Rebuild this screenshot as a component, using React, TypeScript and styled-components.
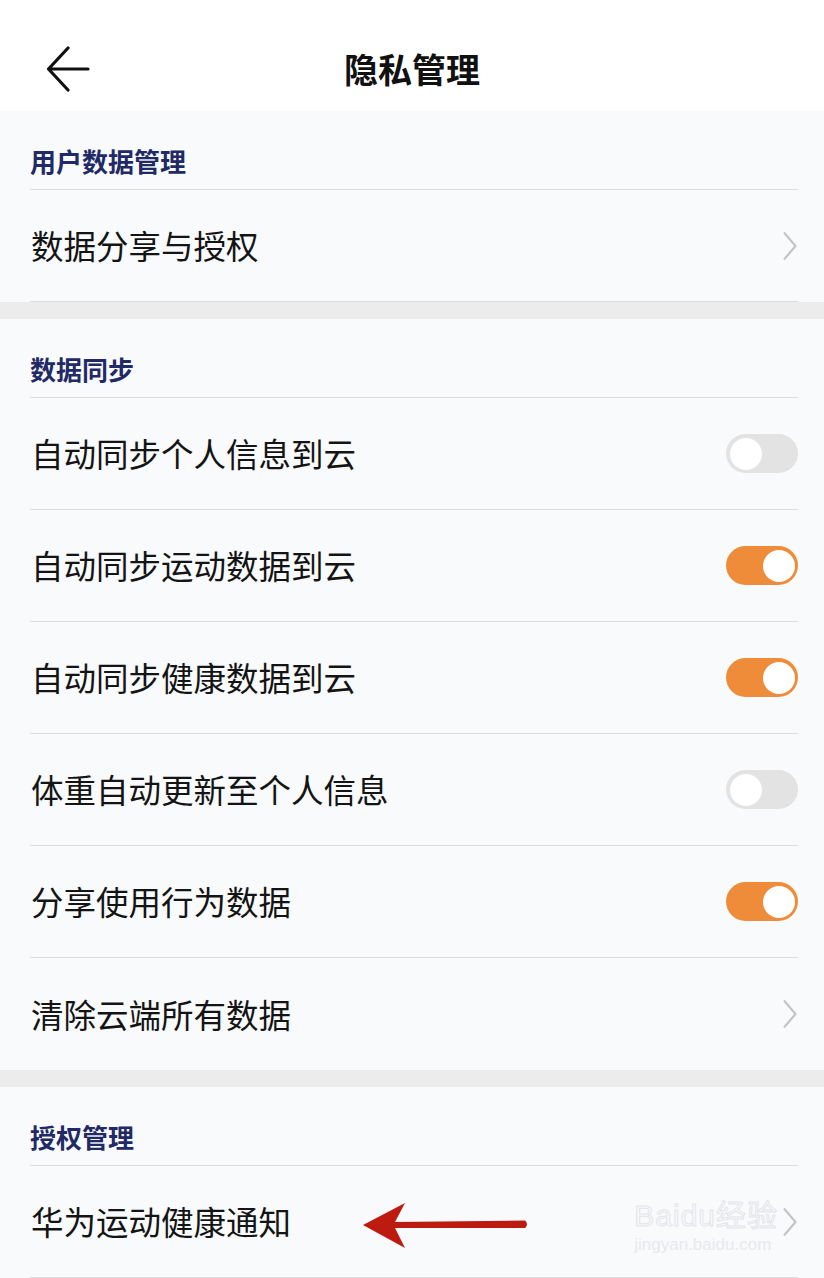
import React from 'react';
import styled, { createGlobalStyle } from 'styled-components';

const GlobalStyle = createGlobalStyle`
  html, body {
    margin: 0;
    padding: 0;
    background: #ececec;
    font-family: "Noto Sans CJK SC", "Noto Sans", sans-serif;
  }
  * { box-sizing: border-box; }
`;

const Page = styled.div`
  width: 824px;
  height: 1278px;
  overflow: hidden;
  display: flex;
  flex-direction: column;
  gap: 17px;
  background: #ececec;
`;

const Header = styled.header`
  height: 112px;
  padding-top: 24px;
  background: #ffffff;
  display: grid;
  grid-template-columns: 120px 1fr 120px;
  align-items: center;
  margin-bottom: -17px;
`;

const BackButton = styled.div`
  padding-left: 46px;
  padding-top: 2px;
  display: flex;
  align-items: center;
`;

const Title = styled.h1`
  margin: 0;
  text-align: center;
  font-size: 34px;
  font-weight: 700;
  color: #111;
  line-height: 1;
  padding-top: 2px;
`;

const Section = styled.section<{ $fill?: boolean }>`
  background: #f9fafc;
  padding: 0 26px 0 30px;
  flex: ${p => (p.$fill ? 1 : 'none')};
`;

const SectionTitle = styled.div`
  height: 79px;
  padding-top: 32px;
  font-size: 26px;
  line-height: 36px;
  font-weight: 700;
  color: #1f2a66;
  border-bottom: 1.5px solid #dcdde0;
`;

const Row = styled.div<{ $last?: boolean }>`
  height: 112px;
  display: flex;
  align-items: center;
  justify-content: space-between;
  position: relative;
  border-bottom: ${p => (p.$last ? 'none' : '1.5px solid #dcdde0')};
`;

const Label = styled.span`
  font-size: 32.5px;
  color: #141414;
  line-height: 1;
  padding-left: 1px;
`;

const Track = styled.div<{ $on: boolean }>`
  width: 72px;
  height: 39px;
  border-radius: 20px;
  background: ${p => (p.$on ? '#ef8c3a' : '#e3e3e3')};
  position: relative;
  flex: none;
`;

const Knob = styled.div<{ $on: boolean }>`
  position: absolute;
  top: 3.5px;
  left: ${p => (p.$on ? '36.5px' : '3.5px')};
  width: 32px;
  height: 32px;
  border-radius: 50%;
  background: #ffffff;
`;

const Annotation = styled.svg`
  position: absolute;
  left: 331px;
  top: 36px;
`;

const Watermark = styled.div`
  position: absolute;
  right: 20px;
  top: 32px;
  display: flex;
  flex-direction: column;
  align-items: flex-start;
  color: transparent;
  -webkit-text-stroke: 1px #e4e5e8;
  font-family: "Liberation Sans", "Noto Sans CJK SC", sans-serif;
  pointer-events: none;
`;

const WaterBig = styled.span`
  font-size: 30px;
  font-weight: 400;
  letter-spacing: 1px;
  line-height: 36px;
`;

const WaterSmall = styled.span`
  font-size: 17px;
  line-height: 22px;
  -webkit-text-stroke: 0;
  color: #e8e9ec;
`;

const Toggle: React.FC<{ on: boolean }> = ({ on }) => (
  <Track $on={on}>
    <Knob $on={on} />
  </Track>
);

const Chevron: React.FC = () => (
  <svg width="16" height="30" viewBox="0 0 16 30">
    <path d="M2 1.5 L13.5 15 L2 28.5" fill="none" stroke="#c3c4c7" strokeWidth="2.2" />
  </svg>
);

const BackArrow: React.FC = () => (
  <svg width="44" height="46" viewBox="0 0 44 46">
    <path d="M42 23 H3 M22 2 L2.5 23 L22 44" fill="none" stroke="#111" strokeWidth="3.2" strokeLinecap="round" strokeLinejoin="round" />
  </svg>
);

const syncRows: { label: string; on?: boolean; chevron?: boolean }[] = [
  { label: '自动同步个人信息到云', on: false },
  { label: '自动同步运动数据到云', on: true },
  { label: '自动同步健康数据到云', on: true },
  { label: '体重自动更新至个人信息', on: false },
  { label: '分享使用行为数据', on: true },
  { label: '清除云端所有数据', chevron: true },
];

export default function App() {
  return (
    <>
      <GlobalStyle />
      <Page>
        <Header>
          <BackButton>
            <BackArrow />
          </BackButton>
          <Title>隐私管理</Title>
          <div />
        </Header>

        <Section>
          <SectionTitle>用户数据管理</SectionTitle>
          <Row>
            <Label>数据分享与授权</Label>
            <Chevron />
          </Row>
        </Section>

        <Section>
          <SectionTitle>数据同步</SectionTitle>
          {syncRows.map((r, i) => (
            <Row key={r.label} $last={i === syncRows.length - 1}>
              <Label>{r.label}</Label>
              {r.chevron ? <Chevron /> : <Toggle on={!!r.on} />}
            </Row>
          ))}
        </Section>

        <Section $fill>
          <SectionTitle>授权管理</SectionTitle>
          <Row>
            <Label>华为运动健康通知</Label>
            <Chevron />
            <Watermark>
              <WaterBig>Baidu经验</WaterBig>
              <WaterSmall>jingyan.baidu.com</WaterSmall>
            </Watermark>
            <Annotation width="170" height="50" viewBox="0 0 170 50">
              <path d="M2 23 L44 1 L34 20 L164 18.5 Q168 22 164 26 L34 26 L44 46 Z" fill="#bd1a10" />
            </Annotation>
          </Row>
        </Section>
      </Page>
    </>
  );
}
